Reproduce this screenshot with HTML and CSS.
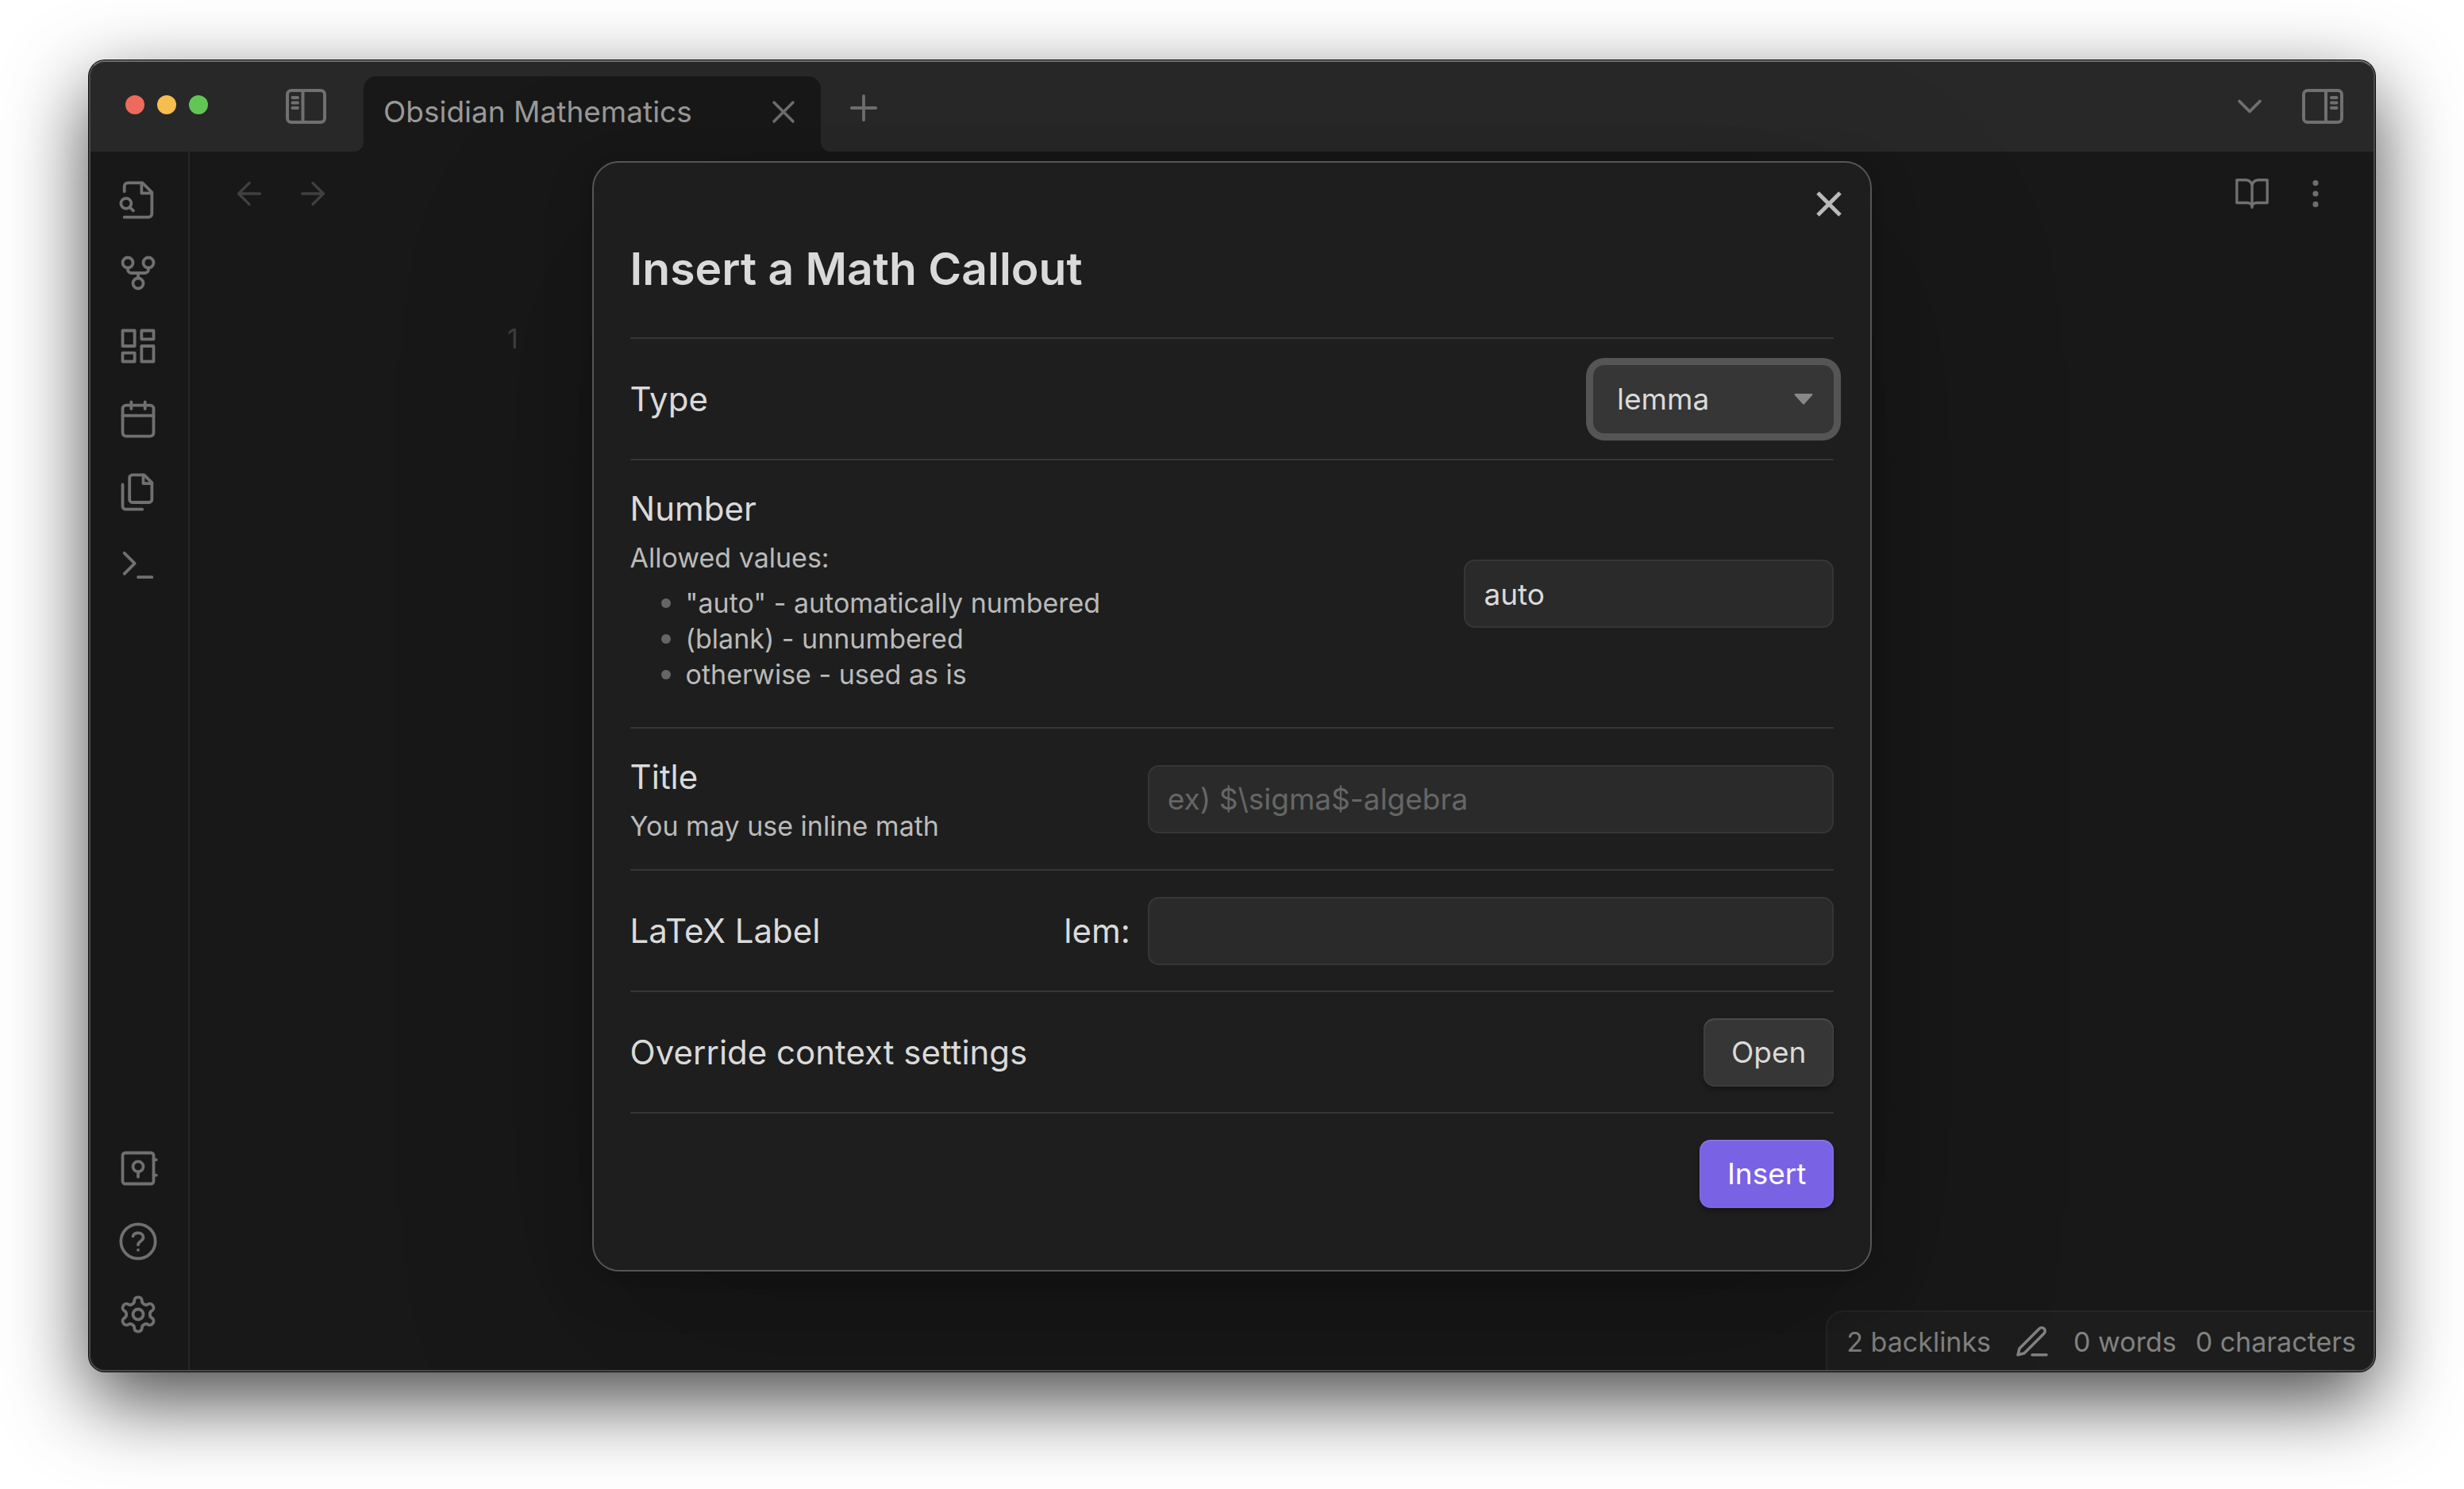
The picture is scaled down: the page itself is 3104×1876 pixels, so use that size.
FILE: index.html
```html
<!DOCTYPE html>
<html lang="en">
<head>
  <meta charset="utf-8">
  <title>Obsidian Mathematics</title>
  <link rel="stylesheet" href="styles.css">
</head>
<body>
  <div class="window">
    <header class="titlebar">
      <div class="titlebar-left">
        <div class="traffic-lights">
          <span class="light light-close"></span>
          <span class="light light-minimize"></span>
          <span class="light light-zoom"></span>
        </div>
        <button class="icon-button" type="button" aria-label="Toggle left sidebar">
          <svg class="icon-toggle" viewBox="0 0 52 44"><rect x="2" y="2" width="47" height="40" rx="5"/><path d="M21.500 2v40M8.500 11h6.500M8.500 17.500h6.500M8.500 24h6.500"/></svg>
        </button>
      </div>
      <div class="tab">
        <span class="tab-title">Obsidian Mathematics</span>
        <button class="icon-button" type="button" aria-label="Close tab">
          <svg class="icon icon-medium" viewBox="0 0 24 24"><path d="M18 6 6 18M6 6l12 12"/></svg>
        </button>
      </div>
      <button class="icon-button new-tab" type="button" aria-label="New tab">
        <svg class="icon" viewBox="0 0 24 24"><path d="M12 5v14M5 12h14"/></svg>
      </button>
      <div class="titlebar-right">
        <button class="icon-button" type="button" aria-label="Tab list">
          <svg class="icon" viewBox="0 0 24 24"><path d="m6 9 6 6 6-6"/></svg>
        </button>
        <button class="icon-button" type="button" aria-label="Toggle right sidebar">
          <svg class="icon-toggle" viewBox="0 0 52 44"><rect x="2" y="2" width="48" height="40" rx="5"/><path d="M30 2v40M37 11h6.500M37 17.500h6.500M37 24h6.500"/></svg>
        </button>
      </div>
    </header>

    <div class="workspace">
      <nav class="ribbon">
        <div class="ribbon-group">
          <button class="icon-button" type="button" aria-label="Quick switcher">
            <svg class="icon" viewBox="0 0 24 24"><path d="M4 22h14a2 2 0 0 0 2-2V7.500L14.500 2H6a2 2 0 0 0-2 2v3"/><path d="M14 2v6h6"/><circle cx="5" cy="14" r="3"/><path d="m9.200 18.200-2-2"/></svg>
          </button>
          <button class="icon-button" type="button" aria-label="Graph view">
            <svg class="icon" viewBox="0 0 24 24"><circle cx="12" cy="18" r="3"/><circle cx="6" cy="6" r="3"/><circle cx="18" cy="6" r="3"/><path d="M18 9v1a2 2 0 0 1-2 2H8a2 2 0 0 1-2-2V9M12 12v3"/></svg>
          </button>
          <button class="icon-button" type="button" aria-label="Canvas">
            <svg class="icon" viewBox="0 0 24 24"><path d="M3 3h7v9H3zM14 3h7v5h-7zM14 12h7v9h-7zM3 16h7v5H3z"/></svg>
          </button>
          <button class="icon-button" type="button" aria-label="Daily note">
            <svg class="icon" viewBox="0 0 24 24"><rect x="3" y="4" width="18" height="18" rx="2"/><path d="M16 2v4M8 2v4M3 10h18"/></svg>
          </button>
          <button class="icon-button" type="button" aria-label="Templates">
            <svg class="icon" viewBox="0 0 24 24"><path d="M15.500 2H8.600c-.4 0-.8.2-1.100.5-.3.3-.5.7-.5 1.100v12.800c0 .4.2.8.5 1.100.3.3.7.5 1.100.5h9.800c.4 0 .8-.2 1.100-.5.3-.3.5-.7.5-1.100V6.500L15.500 2z"/><path d="M3 7.600v12.800c0 .4.2.8.5 1.100.3.3.7.5 1.100.5h9.800M15 2v5h5"/></svg>
          </button>
          <button class="icon-button" type="button" aria-label="Command palette">
            <svg class="icon" viewBox="0 0 24 24"><path d="m4 17 6-6-6-6M12 19h8"/></svg>
          </button>
        </div>
        <div class="ribbon-group">
          <button class="icon-button" type="button" aria-label="Open vault">
            <svg class="icon" viewBox="0 0 24 24"><rect x="3" y="3" width="18" height="18" rx="1.500"/><circle cx="12" cy="11" r="3"/><path d="M12 14v3M21 7h1.500M21 16h1.500"/></svg>
          </button>
          <button class="icon-button" type="button" aria-label="Help">
            <svg class="icon" viewBox="0 0 24 24"><circle cx="12" cy="12" r="10"/><path d="M9 9c.4-1.200 1.500-1.900 3-1.900 1.700 0 3 1.100 3 2.700 0 2-3 2.200-3 4.200M12 17h.01"/></svg>
          </button>
          <button class="icon-button" type="button" aria-label="Settings">
            <svg class="icon" viewBox="0 0 24 24"><path d="M12.220 2h-.44a2 2 0 0 0-2 2v.18a2 2 0 0 1-1 1.730l-.43.25a2 2 0 0 1-2 0l-.15-.08a2 2 0 0 0-2.730.73l-.22.38a2 2 0 0 0 .73 2.730l.15.1a2 2 0 0 1 1 1.720v.51a2 2 0 0 1-1 1.740l-.15.09a2 2 0 0 0-.73 2.730l.22.38a2 2 0 0 0 2.730.73l.15-.08a2 2 0 0 1 2 0l.43.25a2 2 0 0 1 1 1.730V20a2 2 0 0 0 2 2h.44a2 2 0 0 0 2-2v-.18a2 2 0 0 1 1-1.730l.43-.25a2 2 0 0 1 2 0l.15.08a2 2 0 0 0 2.730-.73l.22-.39a2 2 0 0 0-.73-2.730l-.15-.08a2 2 0 0 1-1-1.740v-.5a2 2 0 0 1 1-1.740l.15-.09a2 2 0 0 0 .73-2.730l-.22-.38a2 2 0 0 0-2.730-.73l-.15.08a2 2 0 0 1-2 0l-.43-.25a2 2 0 0 1-1-1.730V4a2 2 0 0 0-2-2z"/><circle cx="12" cy="12" r="3"/></svg>
          </button>
        </div>
      </nav>

      <main class="view">
        <div class="view-header">
          <div class="view-actions view-nav">
            <button class="icon-button" type="button" aria-label="Back">
              <svg class="icon icon-small" viewBox="0 0 24 24"><path d="M19 12H5M12 19l-7-7 7-7"/></svg>
            </button>
            <button class="icon-button" type="button" aria-label="Forward">
              <svg class="icon icon-small" viewBox="0 0 24 24"><path d="M5 12h14M12 5l7 7-7 7"/></svg>
            </button>
          </div>
          <div class="view-actions">
            <button class="icon-button" type="button" aria-label="Reading view">
              <svg class="icon icon-small" viewBox="0 0 24 24"><path d="M2 3h6a4 4 0 0 1 4 4v14a3 3 0 0 0-3-3H2zM22 3h-6a4 4 0 0 0-4 4v14a3 3 0 0 1 3-3h7z"/></svg>
            </button>
            <button class="icon-button" type="button" aria-label="More options">
              <svg class="icon icon-small" viewBox="0 0 24 24"><circle cx="12" cy="5" r="1"/><circle cx="12" cy="12" r="1"/><circle cx="12" cy="19" r="1"/></svg>
            </button>
          </div>
        </div>
        <div class="editor"><span class="line-number">1</span></div>
        <footer class="status-bar">
          <span>2 backlinks</span>
          <svg class="icon icon-medium" viewBox="0 0 24 24"><path d="M12 20h9M16.500 3.500a2.120 2.120 0 0 1 3 3L7 19l-4 1 1-4Z"/></svg>
          <span class="status-counts"><span>0 words</span><span>0 characters</span></span>
        </footer>
      </main>
    </div>

    <div class="modal-container">
      <form class="modal" role="dialog" aria-labelledby="modal-title">
        <button class="modal-close" type="button" aria-label="Close">
          <svg viewBox="0 0 32 32"><path d="M2 2l28 28M30 2 2 30"/></svg>
        </button>
        <h1 class="modal-title" id="modal-title">Insert a Math Callout</h1>

        <div class="setting">
          <label class="setting-name" for="type">Type</label>
          <div class="dropdown">
            <select class="dropdown-select" id="type">
              <option>lemma</option>
              <option>theorem</option>
              <option>definition</option>
            </select>
            <svg class="dropdown-arrow" viewBox="0 0 24 14"><path d="M1 0h22q1 1 0 2L13 13q-1 1-2 0L1 2q-1-1 0-2z"/></svg>
          </div>
        </div>

        <div class="setting">
          <div class="setting-info">
            <label class="setting-name" for="number">Number</label>
            <div class="setting-description">
              <p>Allowed values:</p>
              <ul class="value-list">
                <li>"auto" - automatically numbered</li>
                <li>(blank) - unnumbered</li>
                <li>otherwise - used as is</li>
              </ul>
            </div>
          </div>
          <input class="text-input" id="number" type="text" value="auto">
        </div>

        <div class="setting">
          <div class="setting-info">
            <label class="setting-name" for="title">Title</label>
            <p class="setting-description">You may use inline math</p>
          </div>
          <input class="text-input text-input-wide" id="title" type="text" placeholder="ex) $\sigma$-algebra">
        </div>

        <div class="setting">
          <label class="setting-name" for="label">LaTeX Label</label>
          <span class="label-prefix">lem:</span>
          <input class="text-input text-input-wide" id="label" type="text">
        </div>

        <div class="setting">
          <span class="setting-name">Override context settings</span>
          <button class="button" type="button">Open</button>
        </div>

        <div class="setting">
          <span class="setting-name"></span>
          <button class="button button-cta" type="submit">Insert</button>
        </div>
      </form>
    </div>
  </div>
</body>
</html>
```
FILE: styles.css
```css
:root {
  --bar: #282828;
  --base: #181818;
  --line: #262626;
  --icon: #707070;
  --surface: #1e1e1e;
  --field: #2a2a2a;
  --control: #363636;
  --divider: #363636;
  --outline: #555555;
  --text: #dadada;
  --text-muted: #bababa;
  --text-faint: #666666;
  --accent: #7a62e4;
  --name-size: 42px;
  --control-size: 37px;
  --small-size: 34px;
}

* {
  box-sizing: border-box;
}

body {
  display: flex;
  min-height: 100vh;
  margin: 0;
  padding: 76px 112px 148px;
  background: #ffffff;
  color: var(--text);
  font-family: Inter, "Liberation Sans", sans-serif;
  font-size: var(--control-size);
}

button,
input,
select {
  font: inherit;
  color: inherit;
}

p,
ul,
h1 {
  margin: 0;
}

/* Window frame */

.window {
  position: relative;
  display: flex;
  flex: 1;
  flex-direction: column;
  border-radius: 20px;
  background: var(--base);
  box-shadow: 0 0 0 1px #0a0a0a, 0 36px 100px rgba(0, 0, 0, 0.72);
}

.window::after {
  content: "";
  position: absolute;
  inset: 0;
  border: 2px solid #4a4a4a;
  border-top-color: #6e6e6e;
  border-radius: 20px;
  pointer-events: none;
}

.icon-button {
  display: flex;
  padding: 0;
  border: 0;
  background: none;
  color: var(--icon);
}

.icon,
.icon-toggle {
  width: 52px;
  height: 52px;
  overflow: visible;
  fill: none;
  stroke: currentColor;
  stroke-width: 1.75;
  stroke-linecap: round;
  stroke-linejoin: round;
}

.icon-toggle {
  height: 44px;
  stroke-width: 4;
}

.icon-medium {
  width: 48px;
  height: 48px;
}

.icon-small {
  width: 46px;
  height: 46px;
}

/* Title bar */

.titlebar {
  display: flex;
  align-items: center;
  height: 115px;
  border-radius: 20px 20px 0 0;
  background: var(--bar);
}

.titlebar-left {
  display: flex;
  align-items: center;
  justify-content: space-between;
  width: 346px;
  padding: 0 46px;
}

.traffic-lights {
  display: flex;
  gap: 16px;
  padding-bottom: 4px;
}

.light {
  width: 24px;
  height: 24px;
  border-radius: 50%;
}

.light-close {
  background: #ed6a5f;
}

.light-minimize {
  background: #f6be50;
}

.light-zoom {
  background: #62c655;
}

.tab {
  position: relative;
  display: flex;
  align-items: center;
  align-self: flex-end;
  justify-content: space-between;
  width: 576px;
  height: 95px;
  padding: 0 23px 6px 25px;
  border-radius: 16px 16px 0 0;
  background: var(--base);
}

.tab::before,
.tab::after {
  content: "";
  position: absolute;
  bottom: 0;
  width: 12px;
  height: 12px;
}

.tab::before {
  right: 100%;
  background: radial-gradient(circle at 0 0, transparent 12px, var(--base) 12px);
}

.tab::after {
  left: 100%;
  background: radial-gradient(circle at 100% 0, transparent 12px, var(--base) 12px);
}

.tab-title {
  color: #999999;
}

.new-tab {
  margin-left: 28px;
  padding-top: 4px;
}

.titlebar-right {
  display: flex;
  align-items: center;
  gap: 40px;
  margin-left: auto;
  padding-right: 40px;
}

/* Workspace */

.workspace {
  display: flex;
  flex: 1;
}

.ribbon {
  display: flex;
  flex-direction: column;
  justify-content: space-between;
  width: 127px;
  padding: 35px 2px 46px 0;
  border-right: 2px solid var(--line);
}

.ribbon-group {
  display: flex;
  flex-direction: column;
  align-items: center;
  gap: 40px;
}

.view {
  display: flex;
  flex: 1;
  flex-direction: column;
}

.view-header {
  display: flex;
  align-items: center;
  justify-content: space-between;
  height: 106px;
  padding: 0 52px;
}

.view-actions {
  display: flex;
  gap: 34px;
}

.view-nav .icon-button {
  color: #404040;
}

.editor {
  flex: 1;
  padding: 100px 400px;
  line-height: 58px;
}

.line-number {
  color: #404040;
  font-size: var(--small-size);
}

.status-bar {
  display: flex;
  align-items: center;
  align-self: flex-end;
  gap: 28px;
  height: 77px;
  padding: 0 24px;
  border: 2px solid var(--line);
  border-width: 2px 0 0 2px;
  border-radius: 22px 0 20px 0;
  background: #1d1d1d;
  color: #828282;
  font-size: var(--small-size);
}

.status-counts {
  display: flex;
  gap: 24px;
}

/* Modal */

.modal-container {
  position: absolute;
  inset: 0;
  display: grid;
  place-items: center;
  overflow: hidden;
  border-radius: 20px;
}

.modal {
  position: relative;
  width: 56%;
  padding: 46px;
  border: 2px solid var(--outline);
  border-radius: 34px;
  background: var(--surface);
  box-shadow:
    0 5px 21px rgba(0, 0, 0, 0.07),
    0 18px 71px rgba(0, 0, 0, 0.11),
    0 86px 259px rgba(0, 0, 0, 0.2);
}

.modal-close {
  position: absolute;
  top: 36px;
  right: 36px;
  display: flex;
  padding: 0;
  border: 0;
  background: none;
}

.modal-close svg {
  width: 32px;
  height: 32px;
  fill: none;
  stroke: var(--text-muted);
  stroke-width: 5;
}

.modal-title {
  padding: 50px 0 48px;
  font-size: 57px;
  font-weight: 600;
  line-height: 76px;
}

.setting {
  display: flex;
  align-items: center;
  justify-content: space-between;
  padding: 33px 0 32px;
  border-top: 2px solid var(--divider);
}

.setting-name {
  font-size: var(--name-size);
  line-height: 56px;
}

.setting-info {
  display: flex;
  flex-direction: column;
  gap: 11px;
}

.setting-description {
  color: var(--text-muted);
  font-size: var(--small-size);
  line-height: 45px;
}

.value-list {
  margin: 12px 0;
  padding-left: 70px;
  list-style: none;
}

.value-list li {
  position: relative;
}

.value-list li::before {
  content: "";
  position: absolute;
  top: 17px;
  left: -31px;
  width: 12px;
  height: 12px;
  border-radius: 50%;
  background: var(--text-faint);
}

.label-prefix {
  margin-left: auto;
  padding-right: 22px;
  font-size: var(--name-size);
}

.text-input {
  width: 466px;
  height: 86px;
  padding: 0 23px;
  border: 2px solid var(--divider);
  border-radius: 14px;
  background: var(--field);
}

.text-input-wide {
  width: 57%;
}

.text-input::placeholder {
  color: var(--text-faint);
  opacity: 1;
}

.dropdown {
  position: relative;
  width: 20%;
}

.dropdown-select {
  width: 100%;
  height: 86px;
  padding: 0 30px;
  border: 0;
  border-radius: 14px;
  outline: 0;
  appearance: none;
  background: var(--control);
  box-shadow: 0 0 0 9px var(--outline);
}

.dropdown-arrow {
  position: absolute;
  top: 36px;
  right: 26px;
  width: 24px;
  height: 14px;
  fill: #888888;
  pointer-events: none;
}

.button {
  height: 86px;
  padding: 0 35px;
  border: 0;
  border-radius: 14px;
  background: var(--control);
  box-shadow:
    inset 0 2px 2px rgba(255, 255, 255, 0.09),
    inset 0 0 2px 1px rgba(255, 255, 255, 0.07),
    0 4px 6px rgba(0, 0, 0, 0.3);
}

.button-cta {
  background: var(--accent);
  color: #ffffff;
}
```
